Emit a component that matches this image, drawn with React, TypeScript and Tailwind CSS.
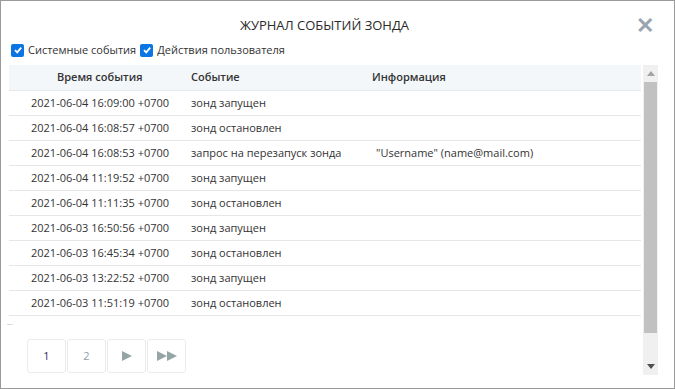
import React from "react";

const rows: [string, string, string][] = [
  ["2021-06-04 16:09:00 +0700", "зонд запущен", ""],
  ["2021-06-04 16:08:57 +0700", "зонд остановлен", ""],
  ["2021-06-04 16:08:53 +0700", "запрос на перезапуск зонда", "\"Username\" (name@mail.com)"],
  ["2021-06-04 11:19:52 +0700", "зонд запущен", ""],
  ["2021-06-04 11:11:35 +0700", "зонд остановлен", ""],
  ["2021-06-03 16:50:56 +0700", "зонд запущен", ""],
  ["2021-06-03 16:45:34 +0700", "зонд остановлен", ""],
  ["2021-06-03 13:22:52 +0700", "зонд запущен", ""],
  ["2021-06-03 11:51:19 +0700", "зонд остановлен", ""],
];

function Check() {
  return (
    <span className="inline-flex w-[13px] h-[13px] rounded-[2px] bg-[#0b75e3] items-center justify-center">
      <svg width="10" height="10" viewBox="0 0 10 10">
        <path d="M2 5.2 L4.2 7.4 L8.2 2.6" stroke="white" strokeWidth="1.8" fill="none" />
      </svg>
    </span>
  );
}

export default function App() {
  return (
    <div
      className="w-[675px] h-[389px] border border-[#9a9a9a] bg-white flex flex-col text-[#333] overflow-hidden"
      style={{ fontFamily: '"Open Sans", "Noto Sans", sans-serif' }}
    >
      <div className="relative h-[40px] flex items-center justify-center pt-[9px] pr-[26px]">
        <span className="text-[13px] font-medium text-[#2a2a2a]">ЖУРНАЛ СОБЫТИЙ ЗОНДА</span>
        <span className="absolute right-[20px] top-[12px] text-[#9aa4ae] text-[22px] font-bold leading-none">✕</span>
      </div>
      <div className="flex items-center h-[18px] pl-[10px] text-[11px] gap-[4px]">
        <Check />
        <span>Системные события</span>
        <Check />
        <span>Действия пользователя</span>
      </div>
      <div className="flex mt-[6px] ml-[8px] gap-[2px] h-[310px]">
        <div className="w-[632px] flex flex-col">
          <div className="h-[26px] bg-[#f4f7fa] border-b border-[#e5e8eb] flex items-center text-[11px] font-semibold">
            <div className="w-[182px] pl-[48px]">Время события</div>
            <div className="w-[181px]">Событие</div>
            <div>Информация</div>
          </div>
          {rows.map((r, i) => (
            <div key={i} className="h-[25px] border-b border-[#e6e6e6] flex items-center text-[11px]">
              <div className="w-[182px] pl-[22px]">{r[0]}</div>
              <div className="w-[181px]">{r[1]}</div>
              <div className="pl-[4px]">{r[2]}</div>
            </div>
          ))}
          <div className="h-[1px] w-[6px] bg-[#ddd] mt-[8px] -ml-[2px]" />
          <div className="flex gap-[1px] ml-[18px] mt-[14px]">
            {["1", "2", "▶", "▶▶"].map((t, i) => (
              <div
                key={i}
                className={
                  "w-[39px] h-[34px] border border-[#ececec] rounded-[3px] flex items-center justify-center text-[11px] " +
                  (i === 0 ? "text-[#2c2c5a]" : "text-[#8fa0a8]")
                }
              >
                {i < 2 ? (
                  t
                ) : i === 2 ? (
                  <svg width="12" height="10" viewBox="0 0 12 10"><path d="M1 0 L11 5 L1 10 Z" fill="#95a5a6" /></svg>
                ) : (
                  <svg width="22" height="10" viewBox="0 0 22 10"><path d="M1 0 L11 5 L1 10 Z M11 0 L21 5 L11 10 Z" fill="#95a5a6" /></svg>
                )}
              </div>
            ))}
          </div>
        </div>
        <div className="w-[15px] bg-[#f0f0f0] flex flex-col items-center">
          <div className="h-[17px] flex items-center justify-center">
            <svg width="8" height="5" viewBox="0 0 8 5"><path d="M0 5 L4 0 L8 5 Z" fill="#a3a3a3" /></svg>
          </div>
          <div className="w-[13px] h-[251px] bg-[#c1c1c1]" />
          <div className="flex-1" />
          <div className="h-[17px] flex items-center justify-center">
            <svg width="8" height="5" viewBox="0 0 8 5"><path d="M0 0 L8 0 L4 5 Z" fill="#505050" /></svg>
          </div>
        </div>
      </div>
    </div>
  );
}
